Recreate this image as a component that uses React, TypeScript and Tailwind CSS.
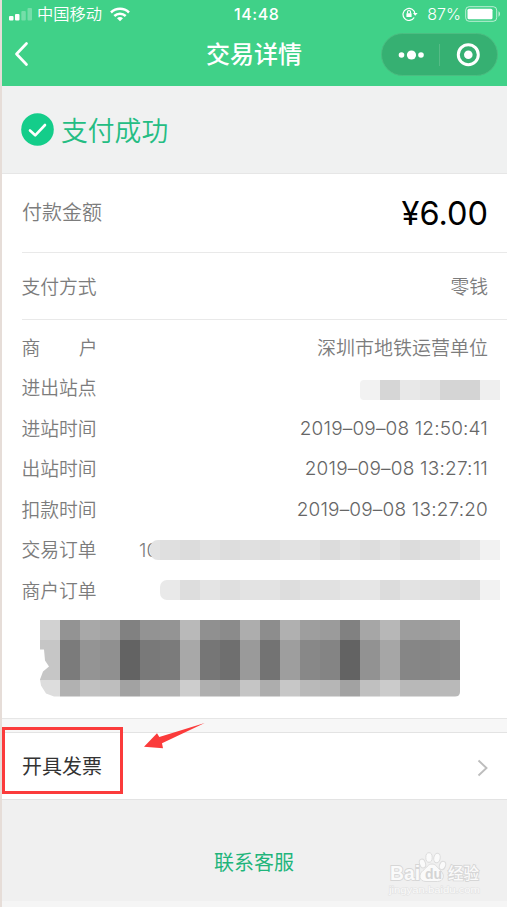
import type { ReactNode } from "react";

const CJK = "font-['Inter','Noto_Sans_CJK_SC',sans-serif]";

type Tile = { w: number; c: string };

const tiles = (first: number, last: number, colors: string[]): Tile[] =>
  colors.map((c, i) => ({ c, w: i === 0 ? first : i === colors.length - 1 ? last : 20 }));

const STATION = tiles(20, 20, ["#f2f2f2", "#d6d6d6", "#e8e8e8", "#e4e4e4", "#d5d5d5", "#d4d4d4", "#efefef"]);
const ORDER = tiles(10, 20, [
  "#e3e3e3", "#dfdfdf", "#dcdcdc", "#e1e1e1", "#dddddd", "#e0e0e0", "#dedede", "#e2e2e2", "#e2e2e2",
  "#dcdcdc", "#e1e1e1", "#dddddd", "#e2e2e2", "#dcdcdc", "#dfdfdf", "#dfdfdf", "#e5e5e5", "#f2f2f2",
]);
const MERCHANT = tiles(20, 20, [
  "#e9e9e9", "#dddddd", "#e4e4e4", "#dfdfdf", "#e3e3e3", "#e3e3e3", "#dddddd", "#e1e1e1", "#e1e1e1",
  "#e5e5e5", "#e6e6e6", "#dcdcdc", "#e3e3e3", "#e1e1e1", "#e0e0e0", "#dddddd", "#f2f2f2",
]);

const BLOCK_ROWS = [
  { h: 20, colors: ["#d2d2d2", "#939393", "#a8a8a8", "#a4a4a4", "#818181", "#939393", "#949494", "#b9b9b9", "#909090", "#8b8b8b", "#adadad", "#8d8d8d", "#b0b0b0", "#9e9e9e", "#9b9b9b", "#818181", "#a6a6a6", "#b7b7b7", "#9d9d9d", "#9c9c9c", "#9e9e9e"] },
  { h: 40, colors: ["#c6c6c6", "#7b7b7b", "#949494", "#909090", "#636363", "#797979", "#7b7b7b", "#a8a8a8", "#767676", "#6f6f6f", "#9a9a9a", "#737373", "#9e9e9e", "#888888", "#848484", "#636363", "#929292", "#a6a6a6", "#868686", "#858585", "#878787"] },
  { h: 17, colors: ["#dddddd", "#b1b1b1", "#c1c1c1", "#bebebe", "#a2a2a2", "#b1b1b1", "#b2b2b2", "#cdcdcd", "#afafaf", "#aaaaaa", "#c5c5c5", "#adadad", "#c7c7c7", "#b9b9b9", "#b6b6b6", "#a2a2a2", "#c0c0c0", "#cbcbcb", "#b8b8b8", "#b8b8b8", "#b9b9b9"] },
];

function Mosaic({ data, className }: { data: Tile[]; className: string }) {
  return (
    <div className={`flex h-5 shrink-0 overflow-hidden ${className}`}>
      {data.map((t, i) => (
        <div key={i} className="h-full shrink-0" style={{ width: t.w, background: t.c }} />
      ))}
    </div>
  );
}

function Row({ label, children }: { label: ReactNode; children?: ReactNode }) {
  return (
    <div className="flex h-[40.5px] items-center justify-between pr-[19px]">
      <div className="-ml-[0.5px] flex w-[76px] justify-between whitespace-nowrap pt-[3px]">{label}</div>
      {children}
    </div>
  );
}

function DateTime({ value, className }: { value: string; className: string }) {
  return <span className={`whitespace-nowrap pt-[1px] text-[19px] font-light text-[#666] ${className}`}>{value}</span>;
}

function StatusBar() {
  return (
    <div className="flex h-7 items-center">
      <div className="flex w-[232px] items-center pl-[7px]">
        <svg width="24" height="13" viewBox="0 0 24 13" fill="#fff">
          <rect x="0" y="8" width="4.5" height="4.5" rx="1" />
          <rect x="6" y="6" width="4.5" height="6.5" rx="1" />
          <rect x="12.3" y="3" width="4.5" height="9.5" rx="1" opacity=".28" />
          <rect x="18.5" y="0" width="4.5" height="12.5" rx="1" opacity=".28" />
        </svg>
        <span className="ml-[4px] text-[16.3px] font-[350] leading-7">中国移动</span>
        <svg className="ml-[8px]" width="20" height="15" viewBox="0 0 20 15" fill="none" stroke="#fff" strokeWidth="2.5">
          <path d="M1 5.5C6 .6 14 .6 19 5.5" />
          <path d="M4.3 9C7.5 6 12.5 6 15.7 9" />
          <path d="M7 11.3c1.8-1.6 4.2-1.6 6 0l-3 3z" fill="#fff" stroke="none" />
        </svg>
      </div>
      <span className="w-[48px] whitespace-nowrap text-[16px] font-medium tracking-[0.55px]">14:48</span>
      <div className="flex flex-1 items-center justify-end pr-[6px]">
        <svg width="16" height="14" viewBox="0 0 16 14" fill="none" stroke="#fff" strokeWidth="1.2">
          <path d="M12.2 10.5A6 6 0 1 1 13 7" />
          <path d="M11 6h4.6L13.2 8.8z" fill="#fff" stroke="none" />
          <rect x="4.4" y="6.2" width="5.2" height="3.9" rx=".5" fill="#fff" stroke="none" />
          <path d="M5.5 6.5V5a1.5 1.5 0 0 1 3 0v1.5" />
        </svg>
        <span className="ml-[9px] text-[16px] font-light">87%</span>
        <svg className="ml-[4px]" width="36" height="16" viewBox="0 0 36 16">
          <rect x=".7" y=".7" width="31" height="14.6" rx="3.5" fill="none" stroke="#fff" strokeWidth="1" opacity=".65" />
          <rect x="2.5" y="2.8" width="25" height="10.4" rx="1.5" fill="#fff" />
          <path d="M33.5 5.3c2 .8 2 4.6 0 5.4z" fill="#fff" opacity=".65" />
        </svg>
      </div>
    </div>
  );
}

function Header() {
  return (
    <header className="h-[86px] bg-[#40d188] text-white">
      <StatusBar />
      <div className="flex h-[52px] items-center">
        <svg className="ml-[12px] shrink-0" width="16" height="26" viewBox="0 0 16 26" fill="none" stroke="#fff" strokeWidth="2.7" strokeLinecap="round" strokeLinejoin="round">
          <path d="M12.5 2.5 2.5 13l10 10.5" />
        </svg>
        <h1 className="ml-[176px] w-[175px] whitespace-nowrap pt-[2px] text-[24px] font-medium leading-[50px]">交易详情</h1>
        <div className="flex h-[43px] w-[117px] shrink-0 items-center rounded-full border border-[#4bbd81] bg-[#36b072]">
          <svg width="115" height="41" viewBox="0 0 115 41" fill="#fff">
            <circle cx="19.5" cy="21" r="2.8" />
            <circle cx="29.5" cy="21" r="4.6" />
            <circle cx="39" cy="21" r="2.8" />
            <path d="M57.5 10v22" stroke="#55bb86" />
            <circle cx="86.3" cy="20.7" r="10" fill="none" stroke="#fff" strokeWidth="3" />
            <circle cx="86.3" cy="20.7" r="4.3" />
          </svg>
        </div>
      </div>
    </header>
  );
}

function Watermark() {
  return (
    <div className="absolute left-[384px] top-[848px] h-[52px] w-[96px]">
      <svg width="96" height="52" viewBox="0 0 96 52">
        <g fill="#fafafa" stroke="#dcdcdc" strokeWidth="1">
          <ellipse cx="36.5" cy="15.5" rx="3" ry="4.5" transform="rotate(-18 36.5 15.5)" />
          <ellipse cx="43" cy="9.5" rx="3.2" ry="4.8" />
          <ellipse cx="51" cy="10" rx="3.2" ry="4.8" transform="rotate(10 51 10)" />
          <ellipse cx="56.5" cy="17.5" rx="3" ry="4.3" transform="rotate(20 56.5 17.5)" />
          <path d="M46 16c4 0 5.5 4 8.5 6.5 5 4.5 3 11-3 11H40c-7 0-8-7-3-11 4-3 5-6.5 9-6.5z" />
        </g>
        <g fill="#fafafa" stroke="#d6d6d6" strokeWidth="1.8" paintOrder="stroke" fontFamily="'Liberation Sans', 'Noto Sans CJK SC', sans-serif">
          <text x="4" y="32" fontSize="20" fontWeight="700" textLength="30" lengthAdjust="spacingAndGlyphs">Bai</text>
          <text x="39" y="30.5" fontSize="14" fontWeight="700" fill="#d4d4d4" stroke="none">du</text>
          <text x="62" y="31" fontSize="15.5" fontWeight="500">经验</text>
          <text x="3" y="45" fontSize="9" strokeWidth="1" stroke="#e2e2e2" textLength="91" lengthAdjust="spacingAndGlyphs">jingyan.baidu.com</text>
        </g>
      </svg>
    </div>
  );
}

export default function App() {
  return (
    <div className={`relative h-[907px] w-[507px] overflow-hidden border-l-2 border-[#e6ddd8] bg-[#f0f0f0] ${CJK}`}>
      <Header />

      <section className="flex h-[87px] items-center bg-[#f0f1f1] pl-[19px]">
        <svg width="33" height="33" viewBox="0 0 33 33">
          <circle cx="16.5" cy="16.5" r="16.3" fill="#14cd8a" />
          <path d="m9 17.5 5.2 4.8L24 12" fill="none" stroke="#fff" strokeWidth="2.6" strokeLinecap="round" strokeLinejoin="round" />
        </svg>
        <span className="ml-[7px] pt-[2px] text-[26.8px] font-[350] leading-[40px] text-[#24bd83]">支付成功</span>
      </section>

      <main className="h-[546px] border-y border-[#e6e6e6] bg-white pl-[20px] text-[18.8px] font-[350] text-[#7c7c7c]">
        <div className="flex h-[79px] items-center justify-between border-b border-[#e9e9e9] pr-[19px]">
          <span className="text-[20px]">付款金额</span>
          <span className="pt-[2px] text-[32.5px] font-normal text-black">¥6.00</span>
        </div>
        <div className="flex h-[67px] items-center justify-between border-b border-[#e9e9e9] pr-[19px] pt-[4px]">
          <span className="-ml-[0.5px]">支付方式</span>
          <span>零钱</span>
        </div>
        <div className="pt-[7px]">
          <Row label={<><span>商</span><span>户</span></>}>
            <span className="pt-[3px] text-[19px]">深圳市地铁运营单位</span>
          </Row>
          <Row label="进出站点">
            <Mosaic data={STATION} className="-mr-[12px] mt-[4px] rounded-l-[4px]" />
          </Row>
          <Row label="进站时间"><DateTime value="2019–09–08 12:50:41" className="tracking-[0.16px]" /></Row>
          <Row label="出站时间"><DateTime value="2019–09–08 13:27:11" className="tracking-[0.2px]" /></Row>
          <Row label="扣款时间"><DateTime value="2019–09–08 13:27:20" className="tracking-[0.18px]" /></Row>
          <Row label="交易订单">
            <div className="-mr-[12px] flex items-center">
              <span className="w-[11px] whitespace-nowrap pt-[2px]">10</span>
              <Mosaic data={ORDER} className="relative rounded-l-[8px]" />
            </div>
          </Row>
          <Row label="商户订单">
            <Mosaic data={MERCHANT} className="-mr-[12px] rounded-l-[7px]" />
          </Row>
        </div>
        <div className="ml-[18px] mt-[9px] w-[420px] overflow-hidden rounded-br-[5px] [clip-path:polygon(0_0,100%_0,100%_100%,14px_100%,6px_74px,1px_66px,0_60px,3px_52px,9px_47px,5px_41px,4px_30px,0_30px)]">
          {BLOCK_ROWS.map((row) => (
            <div key={row.h} className="flex" style={{ height: row.h }}>
              {row.colors.map((c, i) => (
                <div key={i} className="w-5 shrink-0" style={{ background: c }} />
              ))}
            </div>
          ))}
        </div>
      </main>

      <div className="h-[13px] bg-[#f7f7f7]" />
      <section className="flex h-[68px] items-center justify-between border-y border-[#e3e3e3] bg-white pl-[20px] pr-[18px]">
        <span className="pt-[2px] text-[20px] text-[#333]">开具发票</span>
        <svg className="mt-[4px]" width="12" height="18" viewBox="0 0 12 18" fill="none" stroke="#bdbdbd" strokeWidth="1.9">
          <path d="m1.5 1.5 8 7.5-8 7.5" />
        </svg>
      </section>
      <footer className="flex h-[101px] items-center justify-center pr-[1px] pt-[24px] text-[20px] text-[#1fb57b]">
        <span>联系客服</span>
      </footer>
      <div className="h-[6px] bg-[#f5f5f5]" />

      <div className="absolute left-0 top-[727px] h-[67px] w-[121px] border-[3px] border-[#fb3b3b]" />
      <svg className="absolute left-[141px] top-[722px]" width="64" height="28" viewBox="0 0 64 28" fill="#fb3b3b">
        <path d="M1 24.7 14 11.3l2.3 3.7 45.4-14L19 21.3l1 4.9z" />
      </svg>
      <Watermark />
    </div>
  );
}
